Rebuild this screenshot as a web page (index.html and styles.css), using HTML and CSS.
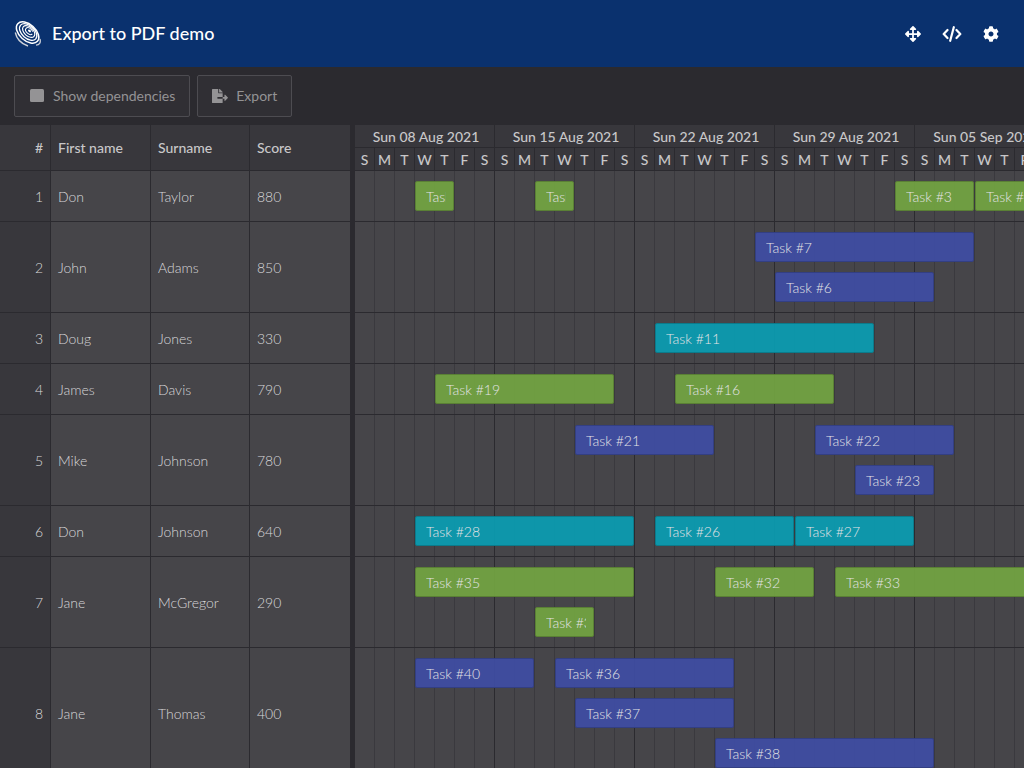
FILE: index.html
```html
<!DOCTYPE html>
<html lang="en">
<head>
<meta charset="utf-8">
<meta name="viewport" content="width=device-width, initial-scale=1">
<title>Export to PDF demo</title>
<link rel="stylesheet" href="styles.css">
</head>
<body>
<header class="demo-header">
  <a class="brand" href="#">
    <svg class="logo" viewBox="0 0 27 27" aria-hidden="true">
      <g fill="none" stroke="#fff">
        <ellipse cx="15.500" cy="10.900" rx="1.700" ry="1.100" transform="rotate(42 15.500 10.900)" fill="#fff" stroke="none"/>
        <ellipse cx="15.200" cy="11.100" rx="4.200" ry="2.700" transform="rotate(42 15.200 11.100)" stroke-width="1.100" stroke-dasharray="19 3"/>
        <ellipse cx="14.700" cy="11.500" rx="7.200" ry="4.500" transform="rotate(42 14.700 11.500)" stroke-width="1.200"/>
        <ellipse cx="14.200" cy="12" rx="10.200" ry="6.300" transform="rotate(42 14.200 12)" stroke-width="1.300"/>
        <ellipse cx="13.600" cy="12.500" rx="13.200" ry="8.100" transform="rotate(42 13.600 12.500)" stroke-width="1.500"/>
        <path d="M1.300 12.500C2.500 18.500 7.500 23.800 14 26" stroke="#ccd0d8" stroke-width="1.400"/>
        <path d="M26 19c1 3.500-.5 6-4 6.200" stroke="#ccd0d8" stroke-width="1.300"/>
      </g>
    </svg>
    <span>Export to PDF demo</span>
  </a>
  <div class="tools">
    <button class="tool" type="button" aria-label="Full screen">
      <svg viewBox="0 0 512 512" aria-hidden="true"><path d="M352.201 425.775l-79.196 79.196c-9.373 9.373-24.568 9.373-33.941 0l-79.196-79.196c-15.119-15.119-4.411-40.971 16.971-40.970h51.162L228 284H127.196v51.162c0 21.382-25.851 32.090-40.971 16.971L7.029 272.937c-9.373-9.373-9.373-24.569 0-33.941L86.225 159.800c15.119-15.119 40.971-4.411 40.971 16.971V228H228V127.196h-51.230c-21.382 0-32.090-25.851-16.971-40.971l79.196-79.196c9.373-9.373 24.568-9.373 33.941 0l79.196 79.196c15.119 15.119 4.411 40.971-16.971 40.971h-51.162V228h100.804v-51.162c0-21.382 25.851-32.090 40.970-16.971l79.196 79.196c9.373 9.373 9.373 24.569 0 33.941L425.773 352.200c-15.119 15.119-40.971 4.411-40.970-16.971V284H284v100.804h51.230c21.382 0 32.090 25.851 16.971 40.971z"/></svg>
    </button>
    <button class="tool wide" type="button" aria-label="Show code">
      <svg viewBox="0 0 20 16" aria-hidden="true"><path d="M5.500 4L1.700 8l3.800 4M14.500 4l3.800 4-3.800 4M11.800 1.200L8.200 14.800" fill="none" stroke="#fff" stroke-width="2.200" stroke-linecap="round" stroke-linejoin="round"/></svg>
    </button>
    <button class="tool" type="button" aria-label="Settings">
      <svg viewBox="0 0 512 512" aria-hidden="true"><path d="M487.400 315.700l-42.600-24.600c4.300-23.200 4.300-47 0-70.200l42.600-24.600c4.900-2.800 7.100-8.600 5.500-14-11.100-35.600-30-67.800-54.700-94.600-3.800-4.100-10-5.100-14.800-2.300L380.800 110c-17.900-15.400-38.500-27.300-60.800-35.100V25.800c0-5.600-3.900-10.500-9.400-11.700-36.700-8.200-74.300-7.800-109.200 0-5.500 1.200-9.400 6.100-9.400 11.700V75c-22.200 7.900-42.800 19.800-60.800 35.100L88.700 85.500c-4.900-2.800-11-1.900-14.800 2.300-24.700 26.700-43.600 58.900-54.700 94.600-1.700 5.400.6 11.200 5.500 14L67.300 221c-4.300 23.200-4.300 47 0 70.200l-42.600 24.600c-4.900 2.800-7.100 8.600-5.500 14 11.100 35.600 30 67.800 54.700 94.600 3.800 4.100 10 5.100 14.800 2.300l42.600-24.600c17.900 15.400 38.500 27.300 60.800 35.100v49.200c0 5.600 3.900 10.500 9.400 11.700 36.700 8.200 74.300 7.800 109.200 0 5.500-1.200 9.400-6.100 9.400-11.700v-49.200c22.200-7.900 42.800-19.800 60.800-35.100l42.600 24.600c4.900 2.800 11 1.900 14.800-2.300 24.700-26.700 43.600-58.900 54.700-94.600 1.500-5.500-.7-11.300-5.600-14.100zM256 336c-44.100 0-80-35.900-80-80s35.900-80 80-80 80 35.900 80 80-35.900 80-80 80z"/></svg>
    </button>
  </div>
</header>

<div class="toolbar">
  <button class="btn" type="button" aria-pressed="false">
    <svg viewBox="0 0 16 16" aria-hidden="true"><rect x="1" y="1" width="14" height="13" rx="1.500"/></svg>
    <span>Show dependencies</span>
  </button>
  <button class="btn" type="button">
    <svg viewBox="0 0 576 512" aria-hidden="true"><path d="M384 121.900c0-6.300-2.500-12.400-7-16.900L279.100 7c-4.500-4.500-10.600-7-17-7H256v128h128zM571 308l-95.700-96.400c-10.100-10.100-27.400-3-27.400 11.300V288h-64v64h64v65.200c0 14.300 17.300 21.400 27.400 11.300L571 332c6.600-6.600 6.600-17.400 0-24zm-379 28v-32c0-8.800 7.200-16 16-16h176V160H248c-13.200 0-24-10.800-24-24V0H24C10.700 0 0 10.700 0 24v464c0 13.300 10.700 24 24 24h336c13.300 0 24-10.700 24-24V352H208c-8.800 0-16-7.200-16-16z"/></svg>
    <span>Export</span>
  </button>
</div>

<main class="scheduler">
<table class="grid">
  <colgroup><col class="c-num"><col class="c-first"><col class="c-sur"><col class="c-score"><col class="c-split"><col></colgroup>
  <thead>
    <tr>
      <th class="num" scope="col">#</th><th scope="col">First name</th><th scope="col">Surname</th><th scope="col" class="last">Score</th><th class="split"></th>
      <th class="axis">
        <div class="weeks"><span>Sun 08 Aug 2021</span><span>Sun 15 Aug 2021</span><span>Sun 22 Aug 2021</span><span>Sun 29 Aug 2021</span><span>Sun 05 Sep 2021</span></div>
        <div class="days">
          <span>S</span><span>M</span><span>T</span><span>W</span><span>T</span><span>F</span><span>S</span>
          <span>S</span><span>M</span><span>T</span><span>W</span><span>T</span><span>F</span><span>S</span>
          <span>S</span><span>M</span><span>T</span><span>W</span><span>T</span><span>F</span><span>S</span>
          <span>S</span><span>M</span><span>T</span><span>W</span><span>T</span><span>F</span><span>S</span>
          <span>S</span><span>M</span><span>T</span><span>W</span><span>T</span><span>F</span><span>S</span>
        </div>
      </th>
    </tr>
  </thead>
  <tbody>
    <tr><td class="num">1</td><td>Don</td><td>Taylor</td><td class="last">880</td><td class="split"></td>
      <td class="lane"><div class="track">
        <div class="event green" style="grid-area: 1 / 4 / auto / span 2"><span>Task #1</span></div>
        <div class="event green" style="grid-area: 1 / 10 / auto / span 2"><span>Task #2</span></div>
        <div class="event green" style="grid-area: 1 / 28 / auto / span 4"><span>Task #3</span></div>
        <div class="event green" style="grid-area: 1 / 32 / auto / span 4"><span>Task #4</span></div>
      </div></td></tr>
    <tr><td class="num">2</td><td>John</td><td>Adams</td><td class="last">850</td><td class="split"></td>
      <td class="lane"><div class="track">
        <div class="event blue" style="grid-area: 1 / 21 / auto / span 11"><span>Task #7</span></div>
        <div class="event blue" style="grid-area: 2 / 22 / auto / span 8"><span>Task #6</span></div>
      </div></td></tr>
    <tr><td class="num">3</td><td>Doug</td><td>Jones</td><td class="last">330</td><td class="split"></td>
      <td class="lane"><div class="track">
        <div class="event teal" style="grid-area: 1 / 16 / auto / span 11"><span>Task #11</span></div>
      </div></td></tr>
    <tr><td class="num">4</td><td>James</td><td>Davis</td><td class="last">790</td><td class="split"></td>
      <td class="lane"><div class="track">
        <div class="event green" style="grid-area: 1 / 5 / auto / span 9"><span>Task #19</span></div>
        <div class="event green" style="grid-area: 1 / 17 / auto / span 8"><span>Task #16</span></div>
      </div></td></tr>
    <tr><td class="num">5</td><td>Mike</td><td>Johnson</td><td class="last">780</td><td class="split"></td>
      <td class="lane"><div class="track">
        <div class="event blue" style="grid-area: 1 / 12 / auto / span 7"><span>Task #21</span></div>
        <div class="event blue" style="grid-area: 1 / 24 / auto / span 7"><span>Task #22</span></div>
        <div class="event blue" style="grid-area: 2 / 26 / auto / span 4"><span>Task #23</span></div>
      </div></td></tr>
    <tr><td class="num">6</td><td>Don</td><td>Johnson</td><td class="last">640</td><td class="split"></td>
      <td class="lane"><div class="track">
        <div class="event teal" style="grid-area: 1 / 4 / auto / span 11"><span>Task #28</span></div>
        <div class="event teal" style="grid-area: 1 / 16 / auto / span 7"><span>Task #26</span></div>
        <div class="event teal" style="grid-area: 1 / 23 / auto / span 6"><span>Task #27</span></div>
      </div></td></tr>
    <tr><td class="num">7</td><td>Jane</td><td>McGregor</td><td class="last">290</td><td class="split"></td>
      <td class="lane"><div class="track">
        <div class="event green" style="grid-area: 1 / 4 / auto / span 11"><span>Task #35</span></div>
        <div class="event green" style="grid-area: 1 / 19 / auto / span 5"><span>Task #32</span></div>
        <div class="event green" style="grid-area: 1 / 25 / auto / span 11"><span>Task #33</span></div>
        <div class="event green" style="grid-area: 2 / 10 / auto / span 3"><span>Task #31</span></div>
      </div></td></tr>
    <tr><td class="num">8</td><td>Jane</td><td>Thomas</td><td class="last">400</td><td class="split"></td>
      <td class="lane"><div class="track">
        <div class="event blue" style="grid-area: 1 / 4 / auto / span 6"><span>Task #40</span></div>
        <div class="event blue" style="grid-area: 1 / 11 / auto / span 9"><span>Task #36</span></div>
        <div class="event blue" style="grid-area: 2 / 12 / auto / span 8"><span>Task #37</span></div>
        <div class="event blue" style="grid-area: 3 / 19 / auto / span 11"><span>Task #38</span></div>
      </div></td></tr>
  </tbody>
</table>
</main>
</body>
</html>
```
FILE: styles.css
```css
* { box-sizing: border-box; }

body {
  margin: 0;
  height: 100vh;
  overflow: hidden;
  display: flex;
  flex-direction: column;
  background: #2b2a2f;
  color: #c8c7c9;
  font: 14px/20px Lato, "Open Sans", sans-serif;
}

button { font: inherit; color: inherit; cursor: pointer; }

.demo-header {
  flex: none;
  display: flex;
  align-items: center;
  justify-content: space-between;
  padding: 20px 24px 20px 14px;
  background: #0a316e;
}
.brand {
  display: flex;
  align-items: center;
  gap: 11px;
  color: #fff;
  font-size: 18px;
  line-height: 27px;
  font-weight: 500;
  text-decoration: none;
}
.logo { width: 27px; height: 27px; }

.tools { display: flex; align-items: center; gap: 20px; }
.tool {
  display: flex;
  padding: 0;
  border: 0;
  background: none;
}
.tool svg { width: 18px; height: 16px; fill: #fff; }
.tool.wide svg { width: 20px; }

.toolbar {
  flex: none;
  display: flex;
  gap: 7px;
  padding: 8px 14px;
}
.btn {
  display: flex;
  align-items: center;
  gap: 8px;
  padding: 10px 14px;
  border: 1px solid #4d4c51;
  border-radius: 2px;
  background: #302f34;
  color: #949395;
}
.btn svg { width: 16px; height: 16px; fill: #949395; }

.scheduler { flex: 1; min-height: 0; overflow: hidden; }
.grid {
  width: 100%;
  table-layout: fixed;
  border-collapse: separate;
  border-spacing: 0;
}
.c-num { width: 51px; }
.c-first { width: 100px; }
.c-sur { width: 99px; }
.c-score { width: 100px; }
.c-split { width: 5px; }

.grid th,
.grid td {
  padding: 0 7px;
  border-right: 1px solid #2b2a2f;
  border-bottom: 1px solid #2b2a2f;
  text-align: left;
  vertical-align: middle;
}
.grid th { background: #38373c; font-weight: 500; }
.grid td { padding-top: 2px; background: #464549; color: #d8d7d9; font-weight: 300; }
.grid .num { text-align: right; background: #38373c; }
.grid .last { border-right: 0; }
.grid .split { padding: 0; border: 0; background: #2b2a2f; }
.grid .axis,
.grid .lane { padding: 0; border-right: 0; overflow: hidden; }

.weeks,
.days { display: grid; text-align: center; }
.weeks { grid-template-columns: repeat(5, 140px); border-bottom: 1px solid #2b2a2f; }
.days { grid-template-columns: repeat(35, 20px); }
.weeks span,
.days span { padding-top: 2px; line-height: 20px; border-right: 1px solid #2b2a2f; }
.weeks span { padding-left: 3px; }

.track {
  display: grid;
  grid-template-columns: repeat(35, 20px);
  grid-auto-rows: 30px;
  row-gap: 10px;
  padding: 10px 0;
  width: 700px;
  background:
    repeating-linear-gradient(to right, transparent 0 139px, #2b2a2f 139px 140px),
    repeating-linear-gradient(to right, transparent 0 19px, #3a393e 19px 20px);
}
.event {
  margin-right: 1px;
  padding: 0 7px 0 10px;
  border: 1px solid;
  border-radius: 2px;
  line-height: 29px;
  color: #e4e4e6;
}
.event span { display: block; overflow: hidden; white-space: nowrap; }
.green { background: rgba(114, 163, 66, .94); border-color: #5a8035; }
.blue { background: rgba(63, 77, 163, .94); border-color: #333f82; }
.teal { background: rgba(11, 155, 176, .94); border-color: #0c7b8b; }
```
